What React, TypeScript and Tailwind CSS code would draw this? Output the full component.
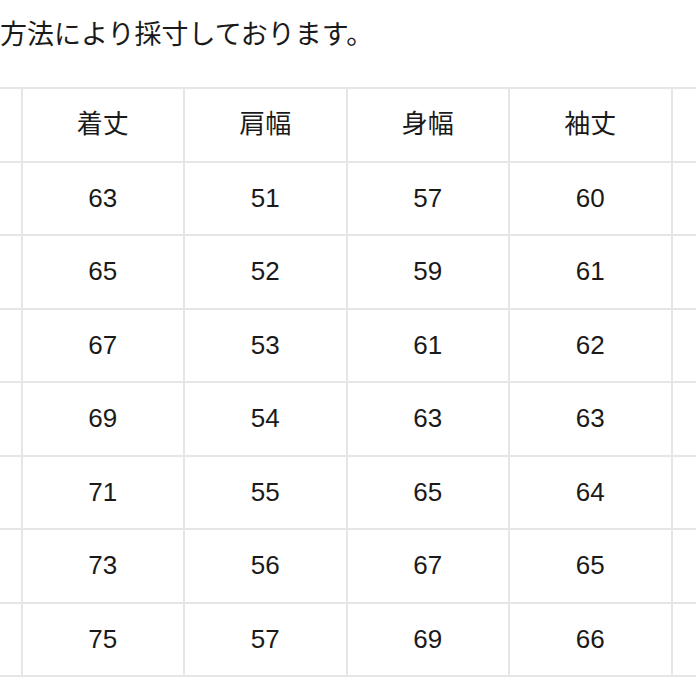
const HEADERS = ["", "着丈", "肩幅", "身幅", "袖丈", ""];

const ROWS = [
  ["63", "51", "57", "60"],
  ["65", "52", "59", "61"],
  ["67", "53", "61", "62"],
  ["69", "54", "63", "63"],
  ["71", "55", "65", "64"],
  ["73", "56", "67", "65"],
  ["75", "57", "69", "66"],
];

export default function App() {
  return (
    <div
      className="w-[696px] h-[696px] overflow-hidden bg-white text-[#1a1a1a]"
      style={{ fontFamily: '"Liberation Sans", "Noto Sans CJK JP", sans-serif' }}
    >
      {/* caption, clipped on the left as in the screenshot */}
      <p className="pl-[0px] pt-[19px] h-[87px] text-[27px] leading-[32px] whitespace-nowrap">
        方法により採寸しております。
      </p>

      <table className="ml-[-142px] w-[975px] min-w-[975px] border-collapse table-fixed">
        <colgroup>
          {HEADERS.map((_, i) => (
            <col key={i} className="w-[162.5px]" />
          ))}
        </colgroup>
        <thead>
          <tr>
            {HEADERS.map((h, i) => (
              <th
                key={i}
                className="h-[73.5px] border-2 border-[#e6e6e6] p-0 text-center align-middle text-[26px] font-normal"
              >
                {h}
              </th>
            ))}
          </tr>
        </thead>
        <tbody>
          {ROWS.map((row, r) => (
            <tr key={r}>
              <td className="h-[73.5px] border-2 border-[#e6e6e6] p-0" />
              {row.map((v, c) => (
                <td
                  key={c}
                  className="h-[73.5px] border-2 border-[#e6e6e6] p-0 text-center align-middle text-[26px]"
                >
                  {v}
                </td>
              ))}
              <td className="h-[73.5px] border-2 border-[#e6e6e6] p-0" />
            </tr>
          ))}
        </tbody>
      </table>
    </div>
  );
}
